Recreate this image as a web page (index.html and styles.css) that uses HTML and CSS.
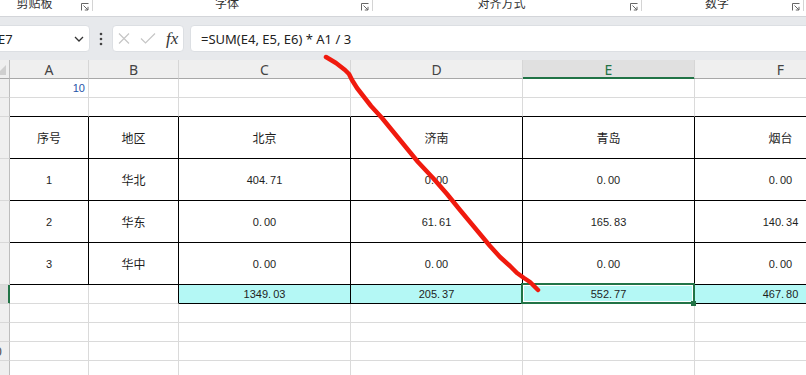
FILE: index.html
```html
<!DOCTYPE html>
<html lang="zh-CN">
<head>
    <meta charset="UTF-8">
    <title>表格</title>
    <link rel="stylesheet" href="styles.css">
</head>
<body>
    <!-- ribbon group labels (cut off at the top) -->
    <div class="ribbon">
        <div class="group g1">
            <span class="group-label">剪贴板</span>
            <svg class="launcher" viewBox="0 0 8 8"><path d="M0.5 7.5V0.5H7.5M2.5 2.5L7 7M7 3.8V7H3.8"/></svg>
        </div>
        <span class="sep"></span>
        <div class="group g2">
            <span class="group-label">字体</span>
            <svg class="launcher" viewBox="0 0 8 8"><path d="M0.5 7.5V0.5H7.5M2.5 2.5L7 7M7 3.8V7H3.8"/></svg>
        </div>
        <span class="sep"></span>
        <div class="group g3">
            <span class="group-label">对齐方式</span>
            <svg class="launcher" viewBox="0 0 8 8"><path d="M0.5 7.5V0.5H7.5M2.5 2.5L7 7M7 3.8V7H3.8"/></svg>
        </div>
        <span class="sep"></span>
        <div class="group g4">
            <span class="group-label">数字</span>
            <svg class="launcher" viewBox="0 0 8 8"><path d="M0.5 7.5V0.5H7.5M2.5 2.5L7 7M7 3.8V7H3.8"/></svg>
        </div>
        <span class="sep"></span>
    </div>

    <!-- formula bar -->
    <div class="formula-bar">
        <div class="name-box">
            <span>E7</span>
            <svg class="chevron" viewBox="0 0 10 6"><path d="M1 1L5 5L9 1"/></svg>
        </div>
        <div class="dots">
            <svg viewBox="0 0 4 14" width="4" height="14"><circle cx="2" cy="2" r="1.3"/><circle cx="2" cy="7" r="1.3"/><circle cx="2" cy="12" r="1.3"/></svg>
        </div>
        <div class="fx-box">
            <svg class="icon-x" viewBox="0 0 12 11"><path d="M1 0.5L11 10.5M11 0.5L1 10.5"/></svg>
            <svg class="icon-ok" viewBox="0 0 16 11"><path d="M1 5.5L5.5 10L15 0.5"/></svg>
            <span class="fx">fx</span>
        </div>
        <div class="formula-input">=SUM(E4, E5, E6) * A1 / 3</div>
    </div>

    <!-- sheet -->
    <div class="sheet">
        <div class="corner"><span class="tri"></span></div>
        <div class="ch">A</div>
        <div class="ch">B</div>
        <div class="ch">C</div>
        <div class="ch">D</div>
        <div class="ch active">E</div>
        <div class="ch">F</div>

        <div class="rh">1</div>
        <div class="c right blue">10</div>
        <div class="c"></div>
        <div class="c"></div>
        <div class="c"></div>
        <div class="c"></div>
        <div class="c"></div>

        <div class="rh">2</div>
        <div class="c bb"></div>
        <div class="c bb"></div>
        <div class="c bb"></div>
        <div class="c bb"></div>
        <div class="c bb"></div>
        <div class="c bb"></div>

        <div class="rh tall">3</div>
        <div class="c bb br cn">序号</div>
        <div class="c bb br cn">地区</div>
        <div class="c bb br cn">北京</div>
        <div class="c bb br cn">济南</div>
        <div class="c bb br cn">青岛</div>
        <div class="c bb br cn">烟台</div>

        <div class="rh tall">4</div>
        <div class="c bb br">1</div>
        <div class="c bb br cn">华北</div>
        <div class="c bb br">404<span class="pt">.</span>71</div>
        <div class="c bb br">0<span class="pt">.</span>00</div>
        <div class="c bb br">0<span class="pt">.</span>00</div>
        <div class="c bb br">0<span class="pt">.</span>00</div>

        <div class="rh tall">5</div>
        <div class="c bb br">2</div>
        <div class="c bb br cn">华东</div>
        <div class="c bb br">0<span class="pt">.</span>00</div>
        <div class="c bb br">61<span class="pt">.</span>61</div>
        <div class="c bb br">165<span class="pt">.</span>83</div>
        <div class="c bb br">140<span class="pt">.</span>34</div>

        <div class="rh tall">6</div>
        <div class="c bb br">3</div>
        <div class="c bb br cn">华中</div>
        <div class="c bb br">0<span class="pt">.</span>00</div>
        <div class="c bb br">0<span class="pt">.</span>00</div>
        <div class="c bb br">0<span class="pt">.</span>00</div>
        <div class="c bb br">0<span class="pt">.</span>00</div>

        <div class="rh active">7</div>
        <div class="c"></div>
        <div class="c br"></div>
        <div class="c bb br fill">1349<span class="pt">.</span>03</div>
        <div class="c bb br fill">205<span class="pt">.</span>37</div>
        <div class="c bb br fill selected">552<span class="pt">.</span>77<span class="sel-box"></span><span class="sel-handle"></span></div>
        <div class="c bb br fill">467<span class="pt">.</span>80</div>

        <div class="rh">8</div>
        <div class="c"></div><div class="c"></div><div class="c"></div><div class="c"></div><div class="c"></div><div class="c"></div>
        <div class="rh">9</div>
        <div class="c"></div><div class="c"></div><div class="c"></div><div class="c"></div><div class="c"></div><div class="c"></div>
        <div class="rh">10</div>
        <div class="c"></div><div class="c"></div><div class="c"></div><div class="c"></div><div class="c"></div><div class="c"></div>
        <div class="rh">11</div>
        <div class="c"></div><div class="c"></div><div class="c"></div><div class="c"></div><div class="c"></div><div class="c"></div>
    </div>

    <!-- red pen stroke drawn over the sheet -->
    <svg class="pen" width="806" height="375" viewBox="0 0 806 375">
        <polyline points="326,57 336,63 345,70 349,74 352,80 357,88 364,97 371,106 382,118 391,129 400,140 409,151 418,162 433,178 447,194 460,210 470,222 480,234 490,246 500,257 510,266 517,273 524,278 530,282 538,290"/>
    </svg>
</body>
</html>
```

FILE: styles.css
```css
body {
    margin: 0;
    width: 806px;
    height: 375px;
    overflow: hidden;
    position: relative;
    background: #ffffff;
    font-family: "Noto Sans", "Noto Sans CJK SC", sans-serif;
    color: #222;
}

/* ribbon */
.ribbon {
    height: 16px;
    display: flex;
    align-items: flex-start;
    overflow: hidden;
    background: #ffffff;
    border-bottom: 1px solid #d3d5d9;
}

.group {
    display: flex;
    align-items: flex-start;
    flex-shrink: 0;
}

.g1 { width: 104px; margin-left: -12px; }
.g2 { width: 279px; }
.g3 { width: 268px; }
.g4 { width: 161px; }

.group-label {
    flex: 1;
    text-align: center;
    font-family: "Noto Sans CJK SC", sans-serif;
    font-size: 12px;
    line-height: 12px;
    margin-top: -3px;
    color: #333;
}

.launcher {
    width: 8px;
    height: 8px;
    margin: 3px 3px 0 0;
    fill: none;
    stroke: #666;
    stroke-width: 1;
}

.sep {
    width: 1px;
    height: 11px;
    background: #d4d4d4;
    flex-shrink: 0;
}

/* formula bar */
.formula-bar {
    display: flex;
    align-items: stretch;
    height: 27px;
    padding: 8px 0;
    background: #e7e9ec;
}

.name-box {
    width: 110px;
    margin-left: -20px;
    box-sizing: border-box;
    padding-left: 17px;
    background: #fff;
    border: 1px solid #dcdfe3;
    border-radius: 4px;
    display: flex;
    align-items: center;
    font-size: 13px;
    flex-shrink: 0;
}

.chevron {
    width: 10px;
    height: 6px;
    margin-left: auto;
    margin-right: 5px;
    fill: none;
    stroke: #333;
    stroke-width: 1.3;
}

.dots {
    width: 22px;
    display: flex;
    align-items: center;
    justify-content: center;
    fill: #444;
    flex-shrink: 0;
}

.fx-box {
    width: 72px;
    box-sizing: border-box;
    background: #fff;
    border: 1px solid #dcdfe3;
    border-radius: 4px;
    display: flex;
    align-items: center;
    flex-shrink: 0;
}

.icon-x {
    width: 12px;
    height: 11px;
    margin-left: 5px;
    fill: none;
    stroke: #c6c6c6;
    stroke-width: 1.2;
}

.icon-ok {
    width: 16px;
    height: 11px;
    margin-left: 10px;
    fill: none;
    stroke: #c6c6c6;
    stroke-width: 1.2;
}

.fx {
    margin-left: 10px;
    font-family: "Liberation Serif", serif;
    font-style: italic;
    font-size: 17px;
    color: #333;
    line-height: 1;
}

.formula-input {
    flex: 1;
    margin-left: 6px;
    margin-right: -10px;
    background: #fff;
    border: 1px solid #dcdfe3;
    border-radius: 4px;
    padding-left: 10px;
    display: flex;
    align-items: center;
    font-size: 13px;
    color: #222;
}

/* sheet grid */
.sheet {
    margin-left: -20px;
    display: grid;
    grid-template-columns: 30px 79px 90px 172px 172px 172px 172px;
    grid-template-rows: 19px 19px 19px 42px 42px 42px 42px 19px 19px 19px 19px 19px;
    background: #e7e9ec;
}

.sheet > div {
    box-sizing: border-box;
    display: flex;
    align-items: center;
    justify-content: center;
    overflow: hidden;
    white-space: nowrap;
    background: #fff;
}

.corner {
    position: relative;
    background: #efefef !important;
    border-right: 1px solid #bdbdbd;
    border-bottom: 1px solid #a8a8a8;
}

.tri {
    position: absolute;
    right: 3px;
    bottom: 3px;
    width: 0;
    height: 0;
    border-left: 10px solid transparent;
    border-bottom: 10px solid #cfcfcf;
}

.ch {
    background: #efefef !important;
    border-right: 1px solid #d6d6d6;
    border-bottom: 1px solid #a8a8a8;
    font-size: 14px;
    color: #444;
}

.ch.active {
    background: #e0e0e0 !important;
    color: #217346;
    border-bottom-color: #217346;
    box-shadow: inset 0 -1px 0 #217346;
}

.rh {
    background: #efefef !important;
    border-right: 1px solid #bdbdbd;
    border-bottom: 1px solid #d8d8d8;
    font-size: 13px;
    color: #555;
}

.rh.active {
    background: #dcdcdc !important;
    border-right-color: #217346;
    box-shadow: inset -1px 0 0 #217346;
}

.c {
    border-right: 1px solid #dadada;
    border-bottom: 1px solid #dadada;
    font-family: "Liberation Sans", Arial, sans-serif;
    font-size: 11px;
    color: #1e1e1e;
}

.c.cn {
    font-family: "Noto Sans CJK SC", sans-serif;
    font-size: 12px;
}

.c.right {
    justify-content: flex-end;
    padding-right: 3px;
}

.c.blue {
    color: #1f55a8;
}

.c.bb { border-bottom-color: #000; }
.c.br { border-right-color: #000; }

.c.fill {
    background: #b4f8f5 !important;
}

.pt {
    margin-right: 2px;
}

.selected {
    position: relative;
    overflow: visible !important;
}

.sel-box {
    position: absolute;
    left: -2px;
    top: -2px;
    width: 174px;
    height: 21px;
    box-sizing: border-box;
    border: 2px solid #217346;
    box-shadow: inset 0 0 0 1px #fff;
}

.sel-handle {
    position: absolute;
    left: 168px;
    top: 16px;
    width: 5px;
    height: 5px;
    background: #217346;
}

/* pen overlay */
.pen {
    position: absolute;
    left: 0;
    top: 0;
    pointer-events: none;
}

.pen polyline {
    fill: none;
    stroke: #f01a0e;
    stroke-width: 4.5;
    stroke-linecap: round;
    stroke-linejoin: round;
}
```
